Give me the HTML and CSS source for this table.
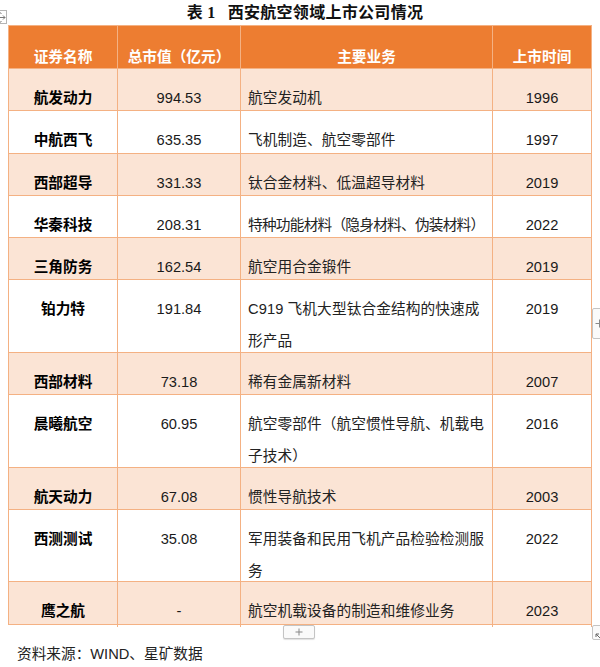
FILE: index.html
```html
<!DOCTYPE html>
<html lang="zh-CN">
<head>
<meta charset="utf-8">
<title>表1 西安航空领域上市公司情况</title>
<link rel="stylesheet" href="styles.css">
</head>
<body>
<div class="page">
  <span class="move-handle" aria-hidden="true">
    <svg width="13" height="13" viewBox="0 0 13 13"><path d="M6.5 1v11M1 6.5h11M6.5 1l-2 2M6.5 1l2 2M6.5 12l-2-2M6.5 12l2-2M1 6.5l2-2M1 6.5l2 2M12 6.5l-2-2M12 6.5l-2 2" fill="none" stroke="#777" stroke-width="1"/></svg>
  </span>
  <h1 class="title">表 <span class="num">1</span>西安航空领域上市公司情况</h1>
  <div class="table">
    <div class="row head">
      <div class="cell">证券名称</div>
      <div class="cell">总市值（亿元）</div>
      <div class="cell">主要业务</div>
      <div class="cell">上市时间</div>
    </div>
    <div class="row">
      <div class="cell name">航发动力</div>
      <div class="cell">994.53</div>
      <div class="cell biz">航空发动机</div>
      <div class="cell">1996</div>
    </div>
    <div class="row">
      <div class="cell name">中航西飞</div>
      <div class="cell">635.35</div>
      <div class="cell biz">飞机制造、航空零部件</div>
      <div class="cell">1997</div>
    </div>
    <div class="row">
      <div class="cell name">西部超导</div>
      <div class="cell">331.33</div>
      <div class="cell biz">钛合金材料、低温超导材料</div>
      <div class="cell">2019</div>
    </div>
    <div class="row">
      <div class="cell name">华秦科技</div>
      <div class="cell">208.31</div>
      <div class="cell biz tight">特种功能材料（隐身材料、伪装材料）</div>
      <div class="cell">2022</div>
    </div>
    <div class="row">
      <div class="cell name">三角防务</div>
      <div class="cell">162.54</div>
      <div class="cell biz">航空用合金锻件</div>
      <div class="cell">2019</div>
    </div>
    <div class="row tall">
      <div class="cell name">铂力特</div>
      <div class="cell">191.84</div>
      <div class="cell biz">C919 飞机大型钛合金结构的快速成<br>形产品</div>
      <div class="cell">2019</div>
    </div>
    <div class="row">
      <div class="cell name">西部材料</div>
      <div class="cell">73.18</div>
      <div class="cell biz">稀有金属新材料</div>
      <div class="cell">2007</div>
    </div>
    <div class="row tall">
      <div class="cell name">晨曦航空</div>
      <div class="cell">60.95</div>
      <div class="cell biz">航空零部件（航空惯性导航、机载电<br>子技术）</div>
      <div class="cell">2016</div>
    </div>
    <div class="row">
      <div class="cell name">航天动力</div>
      <div class="cell">67.08</div>
      <div class="cell biz">惯性导航技术</div>
      <div class="cell">2003</div>
    </div>
    <div class="row tall">
      <div class="cell name">西测测试</div>
      <div class="cell">35.08</div>
      <div class="cell biz">军用装备和民用飞机产品检验检测服<br>务</div>
      <div class="cell">2022</div>
    </div>
    <div class="row">
      <div class="cell name">鹰之航</div>
      <div class="cell">-</div>
      <div class="cell biz">航空机载设备的制造和维修业务</div>
      <div class="cell">2023</div>
    </div>
  </div>
  <span class="add-col" aria-hidden="true">
    <svg width="9" height="9" viewBox="0 0 9 9"><path d="M4.5 0.5v8M0.5 4.5h8" fill="none" stroke="#888" stroke-width="1"/></svg>
  </span>
  <span class="add-row" aria-hidden="true">
    <svg width="8" height="8" viewBox="0 0 8 8"><path d="M4 0.5v7M0.5 4h7" fill="none" stroke="#888" stroke-width="1"/></svg>
  </span>
  <span class="resize" aria-hidden="true">
    <svg width="8" height="8" viewBox="0 0 8 8"><path d="M1 1l5 5M1 1v3M1 1h3" fill="none" stroke="#666" stroke-width="1"/></svg>
  </span>
  <p class="source">资料来源：WIND、星矿数据</p>
</div>
</body>
</html>
```

FILE: styles.css
```css
body {
  margin: 0;
  background: #fff;
  color: #1a1a1a;
  font-family: "Liberation Sans", "Noto Sans CJK SC", sans-serif;
  font-size: 14.67px;
}

.page {
  position: relative;
  width: 600px;
  height: 667px;
  overflow: hidden;
}

.title {
  margin: 0;
  height: 25px;
  box-sizing: border-box;
  padding: 2px 0 0 10px;
  text-align: center;
  font-family: "Liberation Serif", "Noto Sans CJK SC", serif;
  font-size: 16px;
  line-height: 22px;
  font-weight: bold;
  color: #111;
  letter-spacing: 0.3px;
}

.title .num {
  margin-right: 12px;
}

.table {
  margin-left: 8px;
  width: 584px;
  box-sizing: border-box;
  border-left: 1px solid #f4b183;
  border-top: 1px solid #f4b183;
}

.row {
  display: grid;
  grid-template-columns: 109px 123px 252px 99px;
  height: 42.3px;
  box-sizing: border-box;
  border-bottom: 1px solid #f4b183;
}

.row:nth-child(even) {
  background: #fbe4d5;
}

.row.tall {
  height: 72.4px;
}

.row.head {
  height: 43px;
  background: #ed7d31;
  color: #fff;
  font-weight: bold;
}

.cell {
  min-width: 0;
  border-right: 1px solid #f4b183;
  padding-top: 13px;
  line-height: 32px;
  text-align: center;
  white-space: nowrap;
}

.head .cell {
  padding-top: 15px;
}

.cell.name {
  font-weight: bold;
  color: #000;
}

.cell.biz {
  text-align: left;
  padding-left: 7px;
  color: #222;
  letter-spacing: 0.1px;
}

.cell.biz.tight {
  letter-spacing: -0.75px;
}

.head .cell.biz {
  text-align: center;
  padding-left: 0;
  color: #fff;
}

.source {
  margin: 19px 0 0 17px;
  line-height: 20px;
  color: #222;
}

/* Editor chrome overlaid on the table */
.move-handle {
  position: absolute;
  left: -8px;
  top: 10px;
  width: 15px;
  height: 14px;
  box-sizing: border-box;
  border: 1px solid #b5b5b5;
  background: #fff;
  display: flex;
  align-items: center;
  justify-content: center;
}

.add-col {
  position: absolute;
  left: 592px;
  top: 308px;
  width: 18px;
  height: 31px;
  box-sizing: border-box;
  border: 1px solid #c4c4c4;
  border-radius: 2px;
  background: #fafafa;
  display: flex;
  align-items: center;
  padding-left: 2px;
}

.add-row {
  position: absolute;
  left: 283px;
  top: 625px;
  width: 32px;
  height: 14px;
  box-sizing: border-box;
  border: 1px solid #c4c4c4;
  border-radius: 2px;
  background: #fafafa;
  box-shadow: 0 1px 1px rgba(0, 0, 0, 0.12);
  display: flex;
  align-items: center;
  justify-content: center;
}

.resize {
  position: absolute;
  left: 592px;
  top: 625px;
  width: 14px;
  height: 15px;
  box-sizing: border-box;
  border: 1px solid #c4c4c4;
  border-radius: 2px;
  background: #fafafa;
  padding: 2px 0 0 2px;
}
```
